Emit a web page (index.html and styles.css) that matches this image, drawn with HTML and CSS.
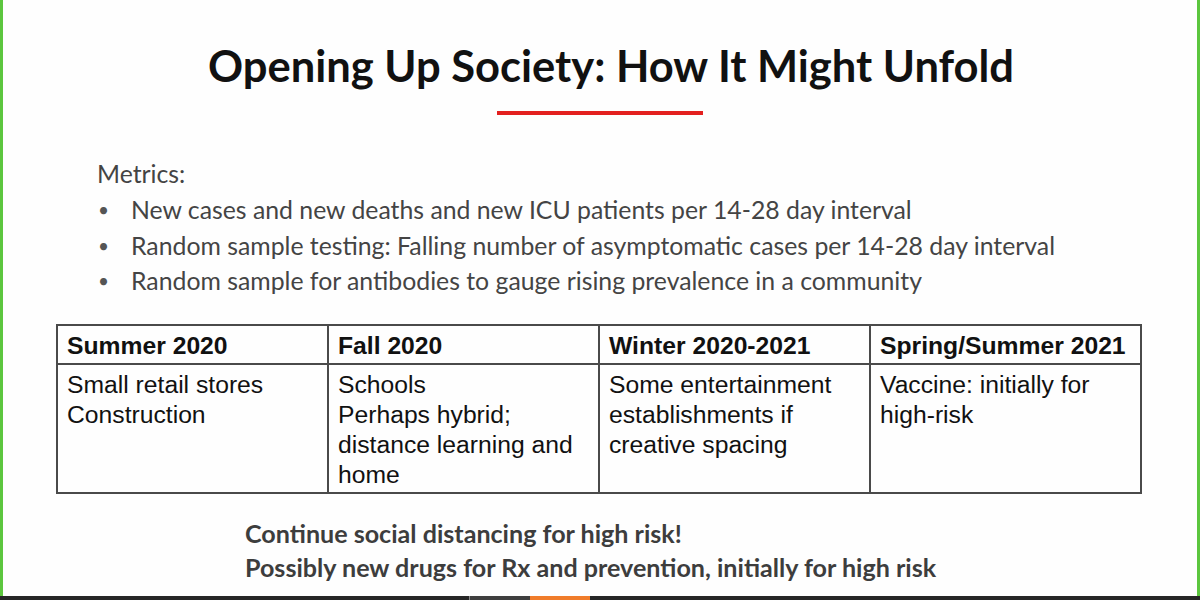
FILE: index.html
```html
<!DOCTYPE html>
<html lang="en">
<head>
<meta charset="utf-8">
<title>Opening Up Society: How It Might Unfold</title>
<link rel="stylesheet" href="styles.css">
</head>
<body>
<div class="screen">
  <main class="slide">
    <h1 class="title">Opening Up Society: How It Might Unfold</h1>
    <div class="rule"></div>
    <section class="metrics">
      <p class="metrics-label">Metrics:</p>
      <ul class="metrics-list">
        <li><span class="dot">•</span><span>New cases and new deaths and new ICU patients per 14-28 day interval</span></li>
        <li><span class="dot">•</span><span>Random sample testing: Falling number of asymptomatic cases per 14-28 day interval</span></li>
        <li><span class="dot">•</span><span>Random sample for antibodies to gauge rising prevalence in a community</span></li>
      </ul>
    </section>
    <table class="phases">
      <thead>
        <tr>
          <th>Summer 2020</th>
          <th>Fall 2020</th>
          <th>Winter 2020-2021</th>
          <th>Spring/Summer 2021</th>
        </tr>
      </thead>
      <tbody>
        <tr>
          <td>Small retail stores<br>Construction</td>
          <td>Schools<br>Perhaps hybrid; distance learning and home</td>
          <td>Some entertainment establishments if creative spacing</td>
          <td>Vaccine: initially for high-risk</td>
        </tr>
      </tbody>
    </table>
    <div class="notes">
      <p>Continue social distancing for high risk!</p>
      <p>Possibly new drugs for Rx and prevention, initially for high risk</p>
    </div>
  </main>
  <div class="progress">
    <span class="seg seg-dark"></span>
    <span class="seg seg-gray"></span>
    <span class="seg seg-orange"></span>
    <span class="seg seg-dark"></span>
  </div>
</div>
</body>
</html>
```
FILE: styles.css
```css
html, body {
  margin: 0;
  padding: 0;
  background: #ffffff;
}

.screen {
  width: 1200px;
  height: 600px;
  display: flex;
  flex-direction: column;
  overflow: hidden;
}

.slide {
  flex: 1;
  min-height: 0;
  background: #fefefe;
  border-left: 3px solid #5cc63e;
  border-right: 3px solid #5cc63e;
  display: flex;
  flex-direction: column;
  padding-top: 38px;
  box-sizing: border-box;
}

.title {
  margin: 0;
  padding-left: 22px;
  text-align: center;
  font-family: Lato, "Open Sans", sans-serif;
  font-weight: 700;
  font-size: 43.5px;
  line-height: 55px;
  color: #111111;
}

.rule {
  align-self: center;
  width: 206px;
  height: 4px;
  margin-top: 18px;
  background: #e3201f;
}

.metrics {
  margin: 41px 0 0 94px;
  font-family: Lato, "Open Sans", sans-serif;
  font-size: 24.8px;
  line-height: 35.8px;
  color: #444444;
}

.metrics-label {
  margin: 0;
}

.metrics-list {
  list-style: none;
  margin: 0;
  padding: 0;
}

.metrics-list li {
  display: flex;
}

.dot {
  width: 34px;
  flex: none;
  font-size: 19px;
  color: #555555;
  padding-left: 1px;
  box-sizing: border-box;
}

.phases {
  margin: 25px 0 0 53px;
  width: 1086px;
  table-layout: fixed;
  border-collapse: collapse;
  font-family: "Liberation Sans", Arial, sans-serif;
  font-size: 24.7px;
  line-height: 30px;
  color: #111111;
}

.phases th,
.phases td {
  border: 2px solid #4a4a4a;
  padding: 5px 9px 2px;
  text-align: left;
  vertical-align: top;
}

.phases th {
  font-weight: 700;
}

.phases td {
  height: 116px;
  padding-top: 5px;
}

.notes {
  margin: 22px 0 0 242px;
  font-family: Lato, "Open Sans", sans-serif;
  font-weight: 700;
  font-size: 25.1px;
  line-height: 34px;
  color: #3d3d3d;
}

.notes p {
  margin: 0;
}

.progress {
  height: 4px;
  flex: none;
  display: grid;
  grid-template-columns: 469px 61px 60px 1fr;
}

.seg-dark {
  background: #262626;
}

.seg-gray {
  background: #3e3e3e;
  border-left: 1px solid #888888;
}

.seg-orange {
  background: #f07c2a;
}
```
